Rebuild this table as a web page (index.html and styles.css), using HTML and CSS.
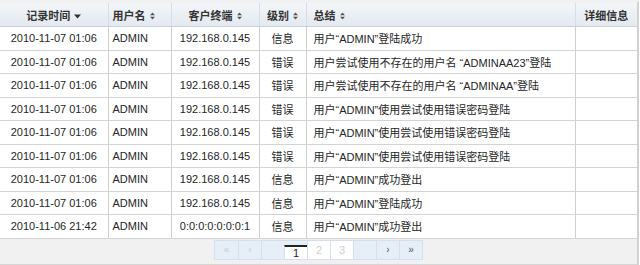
FILE: index.html
```html
<!DOCTYPE html>
<html lang="zh-CN">
<head>
<meta charset="utf-8">
<title>日志</title>
<link rel="stylesheet" href="styles.css">
</head>
<body>
<div class="frame">
  <table class="grid">
    <colgroup>
      <col class="c-time"><col class="c-user"><col class="c-ip"><col class="c-level"><col class="c-sum"><col class="c-detail">
    </colgroup>
    <thead>
      <tr>
        <th class="center">记录时间 <svg class="ico" width="7" height="8" viewBox="0 0 7 8"><path d="M0 2.5h7L3.5 6.5z" fill="#333"/></svg></th>
        <th class="left">用户名 <svg class="ico" width="5" height="8" viewBox="0 0 5 8"><path d="M0 3.2h5L2.5 0.5zM0 4.8h5L2.5 7.5z" fill="#555"/></svg></th>
        <th class="center">客户终端 <svg class="ico" width="5" height="8" viewBox="0 0 5 8"><path d="M0 3.2h5L2.5 0.5zM0 4.8h5L2.5 7.5z" fill="#555"/></svg></th>
        <th class="center">级别 <svg class="ico" width="5" height="8" viewBox="0 0 5 8"><path d="M0 3.2h5L2.5 0.5zM0 4.8h5L2.5 7.5z" fill="#555"/></svg></th>
        <th class="left sum">总结 <svg class="ico" width="5" height="8" viewBox="0 0 5 8"><path d="M0 3.2h5L2.5 0.5zM0 4.8h5L2.5 7.5z" fill="#555"/></svg></th>
        <th class="center">详细信息</th>
      </tr>
    </thead>
    <tbody>
      <tr><td class="center">2010-11-07 01:06</td><td class="left">ADMIN</td><td class="center">192.168.0.145</td><td class="center">信息</td><td class="left sum">用户“ADMIN”登陆成功</td><td></td></tr>
      <tr><td class="center">2010-11-07 01:06</td><td class="left">ADMIN</td><td class="center">192.168.0.145</td><td class="center">错误</td><td class="left sum">用户尝试使用不存在的用户名 “ADMINAA23”登陆</td><td></td></tr>
      <tr><td class="center">2010-11-07 01:06</td><td class="left">ADMIN</td><td class="center">192.168.0.145</td><td class="center">错误</td><td class="left sum">用户尝试使用不存在的用户名 “ADMINAA”登陆</td><td></td></tr>
      <tr><td class="center">2010-11-07 01:06</td><td class="left">ADMIN</td><td class="center">192.168.0.145</td><td class="center">错误</td><td class="left sum">用户“ADMIN”使用尝试使用错误密码登陆</td><td></td></tr>
      <tr><td class="center">2010-11-07 01:06</td><td class="left">ADMIN</td><td class="center">192.168.0.145</td><td class="center">错误</td><td class="left sum">用户“ADMIN”使用尝试使用错误密码登陆</td><td></td></tr>
      <tr><td class="center">2010-11-07 01:06</td><td class="left">ADMIN</td><td class="center">192.168.0.145</td><td class="center">错误</td><td class="left sum">用户“ADMIN”使用尝试使用错误密码登陆</td><td></td></tr>
      <tr><td class="center">2010-11-07 01:06</td><td class="left">ADMIN</td><td class="center">192.168.0.145</td><td class="center">信息</td><td class="left sum">用户“ADMIN”成功登出</td><td></td></tr>
      <tr><td class="center">2010-11-07 01:06</td><td class="left">ADMIN</td><td class="center">192.168.0.145</td><td class="center">信息</td><td class="left sum">用户“ADMIN”登陆成功</td><td></td></tr>
      <tr><td class="center">2010-11-06 21:42</td><td class="left">ADMIN</td><td class="center">0:0:0:0:0:0:0:1</td><td class="center">信息</td><td class="left sum">用户“ADMIN”成功登出</td><td></td></tr>
    </tbody>
  </table>
  <div class="pager">
    <div class="pages">
      <span class="pg dis">&laquo;</span>
      <span class="pg dis">&lsaquo;</span>
      <span class="pg blank"></span>
      <span class="pg cur">1</span>
      <span class="pg num">2</span>
      <span class="pg num">3</span>
      <span class="pg blank"></span>
      <span class="pg act">&rsaquo;</span>
      <span class="pg act">&raquo;</span>
    </div>
  </div>
</div>
</body>
</html>
```

FILE: styles.css
```css
html, body {
  margin: 0;
  padding: 0;
  background: #ffffff;
}
body {
  font-family: "Liberation Sans", "Noto Sans CJK SC", sans-serif;
  font-size: 11px;
  color: #262626;
}
.frame {
  width: 637px;
  border-top: 3px solid #f1f1f1;
  border-right: 2px solid #d2d2d2;
}
.grid {
  width: 637px;
  border-collapse: collapse;
  table-layout: fixed;
}
.c-time { width: 108px; }
.c-user { width: 63px; }
.c-ip { width: 88px; }
.c-level { width: 47px; }
.c-sum { width: 269px; }
.c-detail { width: 62px; }
.grid th {
  height: 23px;
  padding: 0 4px;
  font-weight: bold;
  color: #333;
  background: linear-gradient(#f3f6f9, #e3e9ef);
  border-left: 1px solid #d6dde5;
  border-bottom: 1px solid #c9d1da;
  white-space: nowrap;
}
.grid th:first-child { border-left: none; }
.grid td {
  height: 22.5px;
  padding: 0 4px;
  border-left: 1px solid #cfcfcf;
  border-bottom: 1px solid #d3d3d3;
  white-space: nowrap;
  overflow: hidden;
}
.grid td:first-child { border-left: none; }
.center { text-align: center; }
.left { text-align: left; }
.sum { padding-left: 7px !important; }
.ico { vertical-align: 0; margin-left: 1px; }
.pager {
  height: 24px;
  background: #f1f1f1;
  border-bottom: 1px solid #d6d6d6;
  display: flex;
  justify-content: center;
  align-items: flex-start;
  padding-top: 1px;
}
.pages {
  display: flex;
  height: 20px;
  background: #e6eef8;
  border: 1px solid #d5e0ec;
  box-sizing: border-box;
}
.pg {
  width: 23px;
  height: 18px;
  box-sizing: border-box;
  border-left: 1px solid #d5e0ec;
  display: flex;
  align-items: center;
  justify-content: center;
  font-size: 10px;
}
.pg:first-child { border-left: none; }
.dis { color: #bccbdc; }
.act { color: #555; }
.cur {
  background: #fff;
  color: #222;
  font-size: 11px;
  border-top: 2px solid #222;
  margin-top: 4px;
  height: 14px;
}
.num {
  background: #fff;
  color: #d0d0d0;
  font-size: 11px;
}
```
